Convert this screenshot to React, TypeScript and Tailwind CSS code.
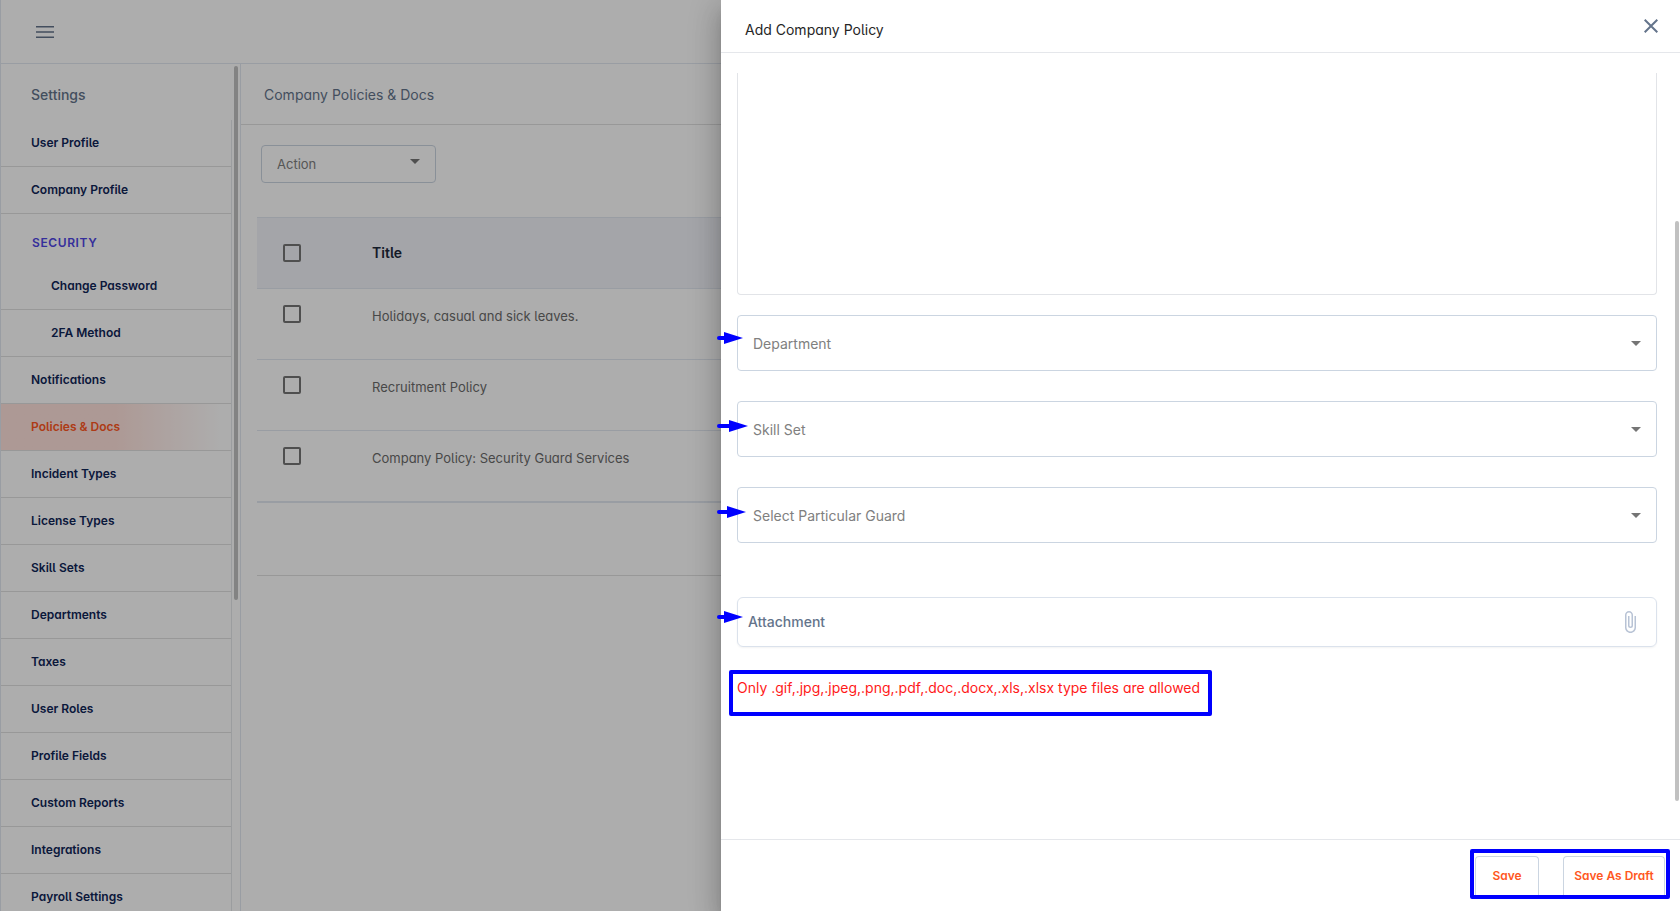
import React from "react";

const alt = "[font-feature-settings:'cv05','cv11']";

type NavItem = { label: string; nested?: boolean; active?: boolean };

const topItems: NavItem[] = [{ label: "User Profile" }, { label: "Company Profile" }];

const securityItems: NavItem[] = [
  { label: "Change Password", nested: true },
  { label: "2FA Method", nested: true },
  { label: "Notifications" },
  { label: "Policies & Docs", active: true },
  { label: "Incident Types" },
  { label: "License Types" },
  { label: "Skill Sets" },
  { label: "Departments" },
  { label: "Taxes" },
  { label: "User Roles" },
  { label: "Profile Fields" },
  { label: "Custom Reports" },
  { label: "Integrations" },
  { label: "Payroll Settings" },
];

const policies = [
  "Holidays, casual and sick leaves.",
  "Recruitment Policy",
  "Company Policy: Security Guard Services",
];

function NavRow({ item }: { item: NavItem }) {
  const tone = item.active
    ? "text-[#ff5722] bg-linear-to-r from-[#ffe2dc] from-50% to-white to-95%"
    : "text-[#0f2557]";
  return (
    <li className="shrink-0">
      <a
        href="#"
        className={`flex h-[47px] items-center border-b border-[#e0e0e0] text-xs font-semibold ${
          item.nested ? "pl-[50px]" : "pl-[30px]"
        } ${tone}`}
      >
        {item.label}
      </a>
    </li>
  );
}

function Caret({ className }: { className: string }) {
  return (
    <svg viewBox="0 0 10 5" className={`pointer-events-none absolute h-[5px] w-[10px] fill-[#757575] ${className}`} aria-hidden="true">
      <path d="M0 0h10L5 5z" />
    </svg>
  );
}

function Check({ label }: { label: string }) {
  return (
    <input
      type="checkbox"
      aria-label={label}
      className="block size-[18px] appearance-none rounded-[2px] border-2 border-[#757575]"
    />
  );
}

function Arrow({ length, className }: { length: number; className: string }) {
  const neck = length - 19;
  return (
    <svg
      width={length}
      height={12}
      viewBox={`0 0 ${length} 12`}
      className={`pointer-events-none absolute -left-5 ${className}`}
      aria-hidden="true"
    >
      <path d={`M2 6H${neck + 2}`} stroke="#0000ff" strokeWidth="4" strokeLinecap="round" />
      <path d={`M${neck} 0L${length} 6L${neck} 12z`} fill="#0000ff" />
    </svg>
  );
}

function SelectField({ label, arrow, arrowTop }: { label: string; arrow: number; arrowTop: string }) {
  return (
    <div className="relative">
      <select
        aria-label={label}
        className="block h-14 w-full appearance-none rounded-[4px] border border-[#cbd5e1] bg-white pt-[2px] pl-[15px] text-sm text-[#808080]"
      >
        <option>{label}</option>
      </select>
      <Caret className="top-[26px] right-4" />
      <Arrow length={arrow} className={arrowTop} />
    </div>
  );
}

export default function App() {
  return (
    <div className={`relative h-screen overflow-hidden bg-white font-[Inter,sans-serif] ${alt}`}>
      <div className="flex h-full flex-col border-l border-slate-200">
        <header className="flex h-16 shrink-0 items-center border-b border-slate-200 pl-[35px]">
          <button type="button" aria-label="Menu">
            <svg width="18" height="12" viewBox="0 0 18 12" className="stroke-[#64748b]" strokeWidth="1.5" fill="none">
              <path d="M0 .75h18M0 6h18M0 11.25h18" />
            </svg>
          </button>
        </header>
        <div className="flex min-h-0 flex-1">
          <aside className="relative flex w-[240px] shrink-0 flex-col overflow-hidden border-r border-slate-200">
            <h2 className="flex h-14 shrink-0 items-center pt-[6px] pl-[30px] text-sm font-medium text-[#64748b]">Settings</h2>
            <nav className="mr-2 min-h-0 flex-1 border-r border-[#e5e7eb]">
              <ul>
                {topItems.map((item) => (
                  <NavRow key={item.label} item={item} />
                ))}
              </ul>
              <h3 className="flex h-[49px] items-center pt-[8px] pl-[31px] text-xs font-semibold tracking-wider text-[#4f46e5]">
                SECURITY
              </h3>
              <ul>
                {securityItems.map((item) => (
                  <NavRow key={item.label} item={item} />
                ))}
              </ul>
            </nav>
            <div className="absolute top-[2px] right-[2px] h-[534px] w-1 rounded-full bg-[#c1c1c1]" />
          </aside>
          <main className="min-w-0 flex-1">
            <h1 className="flex h-[61px] items-center border-b border-[#e0e0e0] pt-[2px] pl-[23px] text-sm text-[#64748b]">
              Company Policies &amp; Docs
            </h1>
            <div className="px-4 pt-5">
              <div className="relative ml-1 w-[175px]">
                <select
                  aria-label="Action"
                  className="block h-[38px] w-full appearance-none rounded-[4px] border border-[#cbd5e1] pt-[2px] pl-[15px] text-[13px] text-[#808080]"
                >
                  <option>Action</option>
                </select>
                <Caret className="top-[14px] right-4" />
              </div>
              <table className="mt-[34px] w-full border-separate border-spacing-0 text-left">
                <thead>
                  <tr className="bg-[#f2f4f9]">
                    <th className="h-[72px] w-[115px] border-y border-slate-200 pl-[26px]">
                      <Check label="Select all policies" />
                    </th>
                    <th className="border-y border-slate-200 text-sm font-semibold text-[#1e293b]">Title</th>
                  </tr>
                </thead>
                <tbody>
                  {policies.map((title, i) => {
                    const edge = i === policies.length - 1 ? "h-[72px] border-b-2" : "h-[71px] border-b";
                    return (
                      <tr key={title} className="align-top">
                        <td className={`border-slate-200 pt-4 pl-[26px] ${edge}`}>
                          <Check label={title} />
                        </td>
                        <td className={`border-slate-200 pt-[17px] text-[13px] leading-5 text-[#6b6b6b] ${edge}`}>{title}</td>
                      </tr>
                    );
                  })}
                </tbody>
              </table>
              <div className="h-[73px] border-b border-[#e0e0e0]" />
            </div>
          </main>
        </div>
      </div>

      <div className="absolute inset-0 bg-black/32" />

      <section
        role="dialog"
        aria-label="Add Company Policy"
        className="absolute inset-y-0 right-0 flex w-[959px] max-w-full flex-col bg-white shadow-[0_8px_10px_-5px_rgba(0,0,0,.2),0_16px_24px_2px_rgba(0,0,0,.14),0_6px_30px_5px_rgba(0,0,0,.12)]"
      >
        <header className="flex h-[53px] shrink-0 items-center justify-between border-b border-[#e5e7eb] pr-[22px] pl-6">
          <h2 className="pt-2 text-sm text-[#262626]">Add Company Policy</h2>
          <button type="button" aria-label="Close">
            <svg width="14" height="14" viewBox="0 0 14 14" className="stroke-[#64748b]" strokeWidth="2">
              <path d="M.7.7l12.6 12.6M13.3.7L.7 13.3" />
            </svg>
          </button>
        </header>

        <div className="flex min-h-0 flex-1 flex-col pt-5 pr-[23px] pl-4">
          <textarea
            aria-label="Policy description"
            className="mb-5 block h-[222px] w-full shrink-0 resize-none rounded-b-[4px] border border-t-0 border-[#e2e4e8]"
          />
          <div className="flex flex-col gap-[30px] [font-feature-settings:normal]">
            <SelectField label="Department" arrow={26} arrowTop="top-[17px]" />
            <SelectField label="Skill Set" arrow={31} arrowTop="top-[19px]" />
            <SelectField label="Select Particular Guard" arrow={29} arrowTop="top-[19px]" />
          </div>
          <div className="relative mt-[54px] [font-feature-settings:normal]">
            <label className="relative flex h-[50px] items-center justify-between rounded-[6px] border border-[#dbe2ec] pr-[14px] pl-[10px] text-sm font-medium text-[#64748b] shadow-xs">
              Attachment
              <input type="file" className="sr-only" />
              <svg width="24" height="24" viewBox="0 0 24 24" className="fill-[#b8c3d5]" aria-hidden="true">
                <path d="M16.5 6v11.5c0 2.21-1.79 4-4 4s-4-1.79-4-4V5a2.5 2.5 0 0 1 5 0v10.5c0 .55-.45 1-1 1s-1-.45-1-1V6H10v9.5a2.5 2.5 0 0 0 5 0V5c0-2.21-1.79-4-4-4S7 2.79 7 5v12.5c0 3.04 2.46 5.5 5.5 5.5s5.5-2.46 5.5-5.5V6h-1.5z" />
              </svg>
            </label>
            <Arrow length={26} className="top-[14px]" />
          </div>
          <p className="mt-[23px] -ml-2 h-[46px] self-start rounded-[2px] border-4 border-[#0000ff] pt-1 pr-2 pl-1 text-sm text-[#ff1a1a] [font-feature-settings:'cv11']">
            Only .gif,.jpg,.jpeg,.png,.pdf,.doc,.docx,.xls,.xlsx type files are allowed
          </p>
        </div>
        <div className="absolute top-[221px] right-[1px] h-[580px] w-1 rounded-full bg-[#c1c1c1]" />

        <footer className="flex h-[72px] shrink-0 items-start justify-end border-t border-[#e5e7eb] pt-[9px] pr-[10px]">
          <div className="flex h-[50px] gap-6 rounded-[2px] border-4 border-[#0000ff] px-px pt-[3px] text-xs font-semibold text-[#ff5722]">
            <button type="button" className="w-16 rounded-t-[4px] border border-b-0 border-[#cbd5e1]">
              Save
            </button>
            <button type="button" className="w-[102px] rounded-t-[4px] border border-b-0 border-[#cbd5e1]">
              Save As Draft
            </button>
          </div>
        </footer>
      </section>
    </div>
  );
}
